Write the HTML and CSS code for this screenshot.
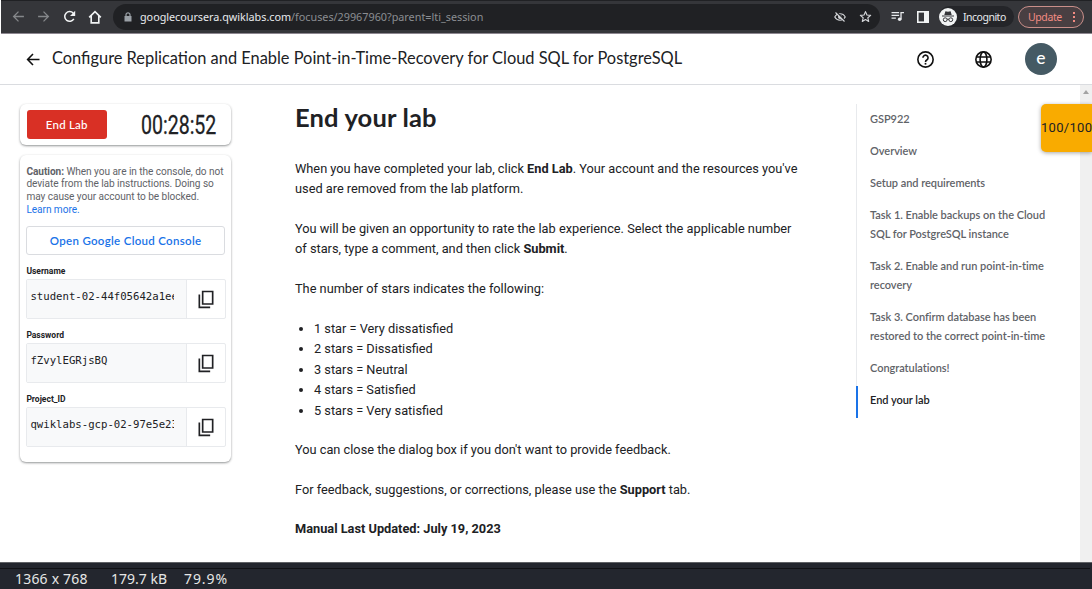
FILE: index.html
```html
<!DOCTYPE html>
<html lang="en">
<head>
<meta charset="utf-8">
<title>Configure Replication and Enable Point-in-Time-Recovery for Cloud SQL for PostgreSQL</title>
<link rel="stylesheet" href="styles.css">
</head>
<body>
<svg class="defs" width="0" height="0">
  <symbol id="copy" viewBox="0 0 24 24"><path fill="none" stroke="currentColor" stroke-width="2" d="M8 3h12v15H8zM4 6.500v15.500h13"/></symbol>
</svg>
<div class="viewer">
  <div class="browser">
    <svg class="ic" viewBox="0 0 24 24"><path class="dim" d="M22 12H3M12 3l-9 9 9 9"/></svg>
    <svg class="ic" viewBox="0 0 24 24"><path class="dim" d="M2 12h19M12 3l9 9-9 9"/></svg>
    <svg class="ic reload" viewBox="0 0 24 24"><path class="lit" d="M20 16.500a9 9 0 1 1-1-10.500l2 2"/><path fill="#f1f3f4" d="M22.500 1.500v9.500h-9.500z"/></svg>
    <svg class="ic home" viewBox="0 0 24 24"><path class="lit" d="M2 12.500L12 3l10 9.500M5.500 10v12h13V10"/></svg>
    <div class="omnibox">
      <svg class="lock" viewBox="0 0 8 10"><path fill="#9aa0a6" d="M0.500 4h7v5.500h-7z"/><path fill="none" stroke="#9aa0a6" stroke-width="1.200" d="M2 4.500V2.800a2 2 0 0 1 4 0v1.700"/></svg>
      <span class="url"><b class="host">googlecoursera.qwiklabs.com</b><span class="path">/focuses/29967960?parent=lti_session</span></span>
      <svg class="eye" viewBox="0 0 24 24"><path fill="none" stroke="#d4d6d9" stroke-width="2.200" d="M1.500 12C6 3.500 18 3.500 22.500 12 18 20.500 6 20.500 1.500 12z"/><circle cx="12" cy="12" r="4" fill="#d4d6d9"/><path stroke="#202124" stroke-width="3" d="M5 2l17 17"/><path stroke="#d4d6d9" stroke-width="2.200" d="M3 3l18 18"/></svg>
      <svg class="star" viewBox="0 0 24 24"><path fill="none" stroke="#d4d6d9" stroke-width="2.100" stroke-linejoin="round" d="M12 3l2.700 6.300 6.800.600-5.200 4.500 1.600 6.700L12 17.500l-5.900 3.600 1.600-6.700L2.500 9.900l6.800-.600z"/></svg>
    </div>
    <svg class="queue" viewBox="0 0 24 20"><path fill="none" stroke="#e8eaed" stroke-width="2.400" d="M1 3h14M1 8h14M1 13h8M18.500 15V3H24"/><circle cx="16" cy="15" r="3.300" fill="#e8eaed"/></svg>
    <svg class="panel" viewBox="0 0 12 12"><path fill="#f1f3f4" d="M0 0h12v12H0z"/><path fill="#35363a" d="M1.600 1.600h5.400v8.800H1.600z"/></svg>
    <div class="incognito">
      <svg viewBox="0 0 18 18"><circle cx="9" cy="9" r="9" fill="#f1f3f4"/><path fill="#35363a" d="M5.300 7l1.100-3.700 2.600.500 2.600-.500L12.700 7zM3 7.400h12v1H3z"/><g fill="none" stroke="#35363a" stroke-width="1"><circle cx="6.200" cy="11.700" r="1.900"/><circle cx="11.800" cy="11.700" r="1.900"/><path d="M8 11.400q1-.7 2 0"/></g></svg>
      <span>Incognito</span>
    </div>
    <div class="update"><span>Update</span><i class="dots"><i></i><i></i><i></i></i></div>
  </div>

  <header class="top">
    <svg class="back" viewBox="0 0 14 14"><path fill="none" stroke="#111" stroke-width="1.700" d="M14 7H1.500M7 1L1.200 7 7 13"/></svg>
    <h1 class="title">Configure Replication and Enable Point-in-Time-Recovery for Cloud SQL for PostgreSQL</h1>
    <svg class="help" viewBox="0 0 20 20"><circle cx="10" cy="10" r="9" fill="none" stroke="#111" stroke-width="1.900"/><path fill="none" stroke="#111" stroke-width="1.900" d="M7 8a3 3 0 1 1 4.800 2.300Q10 11.500 10 13"/><path fill="#111" d="M9 14h2v2H9z"/></svg>
    <svg class="globe" viewBox="0 0 20 20"><g fill="none" stroke="#111" stroke-width="1.900"><circle cx="10" cy="10" r="9"/><ellipse cx="10" cy="10" rx="4" ry="9"/><path d="M1.500 7h17M1.500 13h17"/></g></svg>
    <div class="avatar">e</div>
  </header>

  <div class="page">
    <aside class="side">
      <div class="card timer-card">
        <button class="end">End Lab</button>
        <div class="timer"><span>00:28:52</span></div>
      </div>
      <div class="card creds">
        <p class="caution"><b>Caution:</b> When you are in the console, do not<br>deviate from the lab instructions. Doing so<br>may cause your account to be blocked.<br><a>Learn more.</a></p>
        <button class="open">Open Google Cloud Console</button>
        <label>Username</label>
        <div class="field"><div class="val"><span>student-02-44f05642a1ee</span></div><div class="copy"><svg><use href="#copy"/></svg></div></div>
        <label>Password</label>
        <div class="field"><div class="val"><span>fZvylEGRjsBQ</span></div><div class="copy"><svg><use href="#copy"/></svg></div></div>
        <label>Project_ID</label>
        <div class="field"><div class="val"><span>qwiklabs-gcp-02-97e5e23</span></div><div class="copy"><svg><use href="#copy"/></svg></div></div>
      </div>
    </aside>

    <main class="doc">
      <h2>End your lab</h2>
      <p>When you have completed your lab, click <b>End Lab</b>. Your account and the resources you've<br>used are removed from the lab platform.</p>
      <p>You will be given an opportunity to rate the lab experience. Select the applicable number<br>of stars, type a comment, and then click <b>Submit</b>.</p>
      <p>The number of stars indicates the following:</p>
      <ul>
        <li>1 star = Very dissatisfied</li>
        <li>2 stars = Dissatisfied</li>
        <li>3 stars = Neutral</li>
        <li>4 stars = Satisfied</li>
        <li>5 stars = Very satisfied</li>
      </ul>
      <p>You can close the dialog box if you don't want to provide feedback.</p>
      <p>For feedback, suggestions, or corrections, please use the <b>Support</b> tab.</p>
      <p><b>Manual Last Updated: July 19, 2023</b></p>
    </main>

    <nav class="toc">
      <a>GSP922</a>
      <a>Overview</a>
      <a>Setup and requirements</a>
      <a>Task 1. Enable backups on the Cloud<br>SQL for PostgreSQL instance</a>
      <a>Task 2. Enable and run point-in-time<br>recovery</a>
      <a>Task 3. Confirm database has been<br>restored to the correct point-in-time</a>
      <a>Congratulations!</a>
      <a class="on">End your lab</a>
    </nav>
    <div class="scroll"><svg viewBox="0 0 6 4"><path fill="#a3a3a3" d="M0 4l3-4 3 4z"/></svg></div>
    <div class="score">100/100</div>
  </div>
  <footer class="status"><span class="dim-px">1366 x 768</span><span class="size">179.7 kB</span><span class="zoom">79.9%</span></footer>
</div>
</body>
</html>
```
FILE: styles.css
```css
* { box-sizing: border-box; }
body { margin: 0; overflow: hidden; background: #fff; font-family: Roboto, sans-serif; color: #202124; }
svg { display: block; flex: none; }
.defs { position: absolute; }
button { font: inherit; margin: 0; padding: 0; display: block; }
.viewer { width: 1092px; height: 589px; display: flex; flex-direction: column; }

.browser { height: 34px; margin-left: 1px; background: #35363a; border-top: 1px solid #202124; border-bottom: 1px solid #8d8790; display: flex; align-items: center; padding: 0 0 1px 11px; flex: none; font-family: "Noto Sans", sans-serif; }
.ic { width: 13px; height: 13px; margin-right: 12px; }
.dim { fill: none; stroke: #85878a; stroke-width: 2.4; }
.lit { fill: none; stroke: #f1f3f4; stroke-width: 2.8; }
.reload { margin-left: 1px; }
.home { width: 14px; height: 14px; margin-right: 11px; }
.omnibox { width: 767px; height: 26px; border-radius: 13px; background: #202124; display: flex; align-items: center; padding-left: 11px; }
.lock { width: 8px; height: 10px; margin-right: 8px; }
.url { font-size: 10.8px; white-space: nowrap; width: 694px; }
.host { font-weight: 400; color: #e8eaed; letter-spacing: -0.02px; }
.path { color: #8b8e92; letter-spacing: 0; }
.eye { width: 12px; height: 12px; margin-right: 13px; }
.star { width: 13px; height: 13px; }
.queue { width: 13px; height: 11px; margin-left: 11px; }
.panel { width: 12px; height: 12px; margin-left: 13px; }
.incognito { width: 75px; height: 21px; margin-left: 10px; border-radius: 11px; background: #242529; display: flex; align-items: center; color: #e8eaed; font-size: 10.5px; letter-spacing: -.5px; }
.incognito svg { width: 18px; height: 18px; margin-right: 6px; }
.update { width: 66px; height: 22px; margin-left: 4px; border: 1px solid #c98f8a; border-radius: 11px; background: #493f42; color: #f28b82; display: flex; align-items: center; padding-left: 9px; font-size: 10.5px; letter-spacing: -.4px; }
.update span { width: 45px; }
.dots { display: flex; flex-direction: column; gap: 2px; }
.dots i { width: 2px; height: 2px; background: #f28b82; }

.top { height: 51px; flex: none; border-bottom: 1px solid #dadce0; display: flex; align-items: center; padding-left: 26px; }
.back { width: 14px; height: 13px; }
.title { margin: 0 0 0 12px; padding-bottom: 3px; width: 865px; font: 400 16.4px Lato, sans-serif; white-space: nowrap; }
.help, .globe { width: 17px; height: 17px; }
.globe { margin-left: 41px; }
.avatar { width: 32px; height: 32px; margin-left: 33px; border-radius: 50%; background: #455a64; color: #fff; font: 500 17.5px/30px Lato, sans-serif; text-align: center; }

.page { height: 477px; flex: none; display: flex; position: relative; padding-left: 20px; }
.side { width: 211px; padding-top: 19px; }
.card { border-radius: 6px; background: #fff; box-shadow: 0 1px 2px rgba(60,64,67,.4), 0 1px 3px rgba(60,64,67,.2); }
.timer-card { height: 41px; display: flex; align-items: center; padding-left: 6.5px; }
.end { width: 80.5px; height: 29px; border: 0; border-radius: 3px; background: #d93025; color: #fff; font: 500 11.5px Lato, sans-serif; letter-spacing: .2px; }
.timer { width: 78px; margin-left: 34px; padding-top: 2px; font-size: 26.4px; line-height: 29px; white-space: nowrap; -webkit-text-stroke: .3px #202124; }
.timer span { display: inline-block; transform: scaleX(.74); transform-origin: 0 50%; }
.creds { height: 307px; margin-top: 10px; padding: 10.600px 6px 0 6.400px; }
.caution { margin: 0; color: #5f6368; font-size: 10.1px; line-height: 12.8px; white-space: nowrap; letter-spacing: -.05px; }
.caution a { color: #1a73e8; }
.open { width: 198.500px; height: 29px; margin: 9.400px 0 9px; background: #fff; border: 1px solid #dadce0; border-radius: 3px; color: #1a73e8; font: 600 11.5px Lato, sans-serif; letter-spacing: .3px; }
label { display: block; height: 15px; line-height: 14px; font-size: 8.5px; font-weight: 700; }
.field { width: 199.500px; height: 40px; margin-bottom: 9px; border: 1px solid #e8eaed; border-radius: 2px; display: flex; }
.val { width: 160px; padding: 9px 12px 0 3px; background: #f8f9fa; border-right: 1px solid #e8eaed; font: 10.67px/15px "DejaVu Sans Mono", monospace; white-space: nowrap; }
.val span { display: block; overflow: hidden; }
.copy { padding: 8.500px 0 0 9px; }
.copy svg { width: 20px; height: 20px; }

.doc { width: 561px; padding: 17px 0 0 64px; font-size: 12.78px; line-height: 20.2px; white-space: nowrap; }
.doc h2 { margin: 0 0 26.800px; font: 700 25.5px/30px Lato, sans-serif; letter-spacing: .15px; }
.doc p { margin: 0 0 19.600px; }
.doc ul { margin: 0 0 18.800px; padding-left: 19px; line-height: 20.5px; }

.toc { width: 224px; height: 314px; margin: 19px 0 0 64px; border-left: 1px solid #e8eaed; white-space: nowrap; }
.toc a { display: block; margin-left: -1px; padding: 4.8px 0 8px 14px; font: 600 11px/19.2px Lato, sans-serif; letter-spacing: -.04px; color: #5f6368; }
.toc .on { border-left: 2px solid #1a73e8; padding-left: 12px; color: #202124; }
.scroll { width: 12px; background: #f0f0f0; padding: 5px 0 0 3px; }
.scroll svg { width: 6px; height: 4px; }
.score { position: absolute; right: 0; top: 19px; width: 51px; height: 48px; border-radius: 5px 0 0 5px; background: #f9ab00; box-shadow: 0 1px 4px rgba(0,0,0,.35); font-size: 13px; line-height: 48px; white-space: nowrap; overflow: hidden; letter-spacing: .3px; }

.status { height: 27px; background: #23262e; border-top: 1px solid #606266; display: flex; flex: none; padding-top: 5px; color: #e6e6e6; font: 14px/22px "Noto Sans", sans-serif; padding-left: 15px; white-space: nowrap; background-image: linear-gradient(#101115, #101115); background-size: 1090px 1px; background-repeat: no-repeat; background-position: 0 5px; }
.dim-px { width: 96px; letter-spacing: .2px; }
.size { width: 73px; }
.zoom { letter-spacing: .9px; }
```
